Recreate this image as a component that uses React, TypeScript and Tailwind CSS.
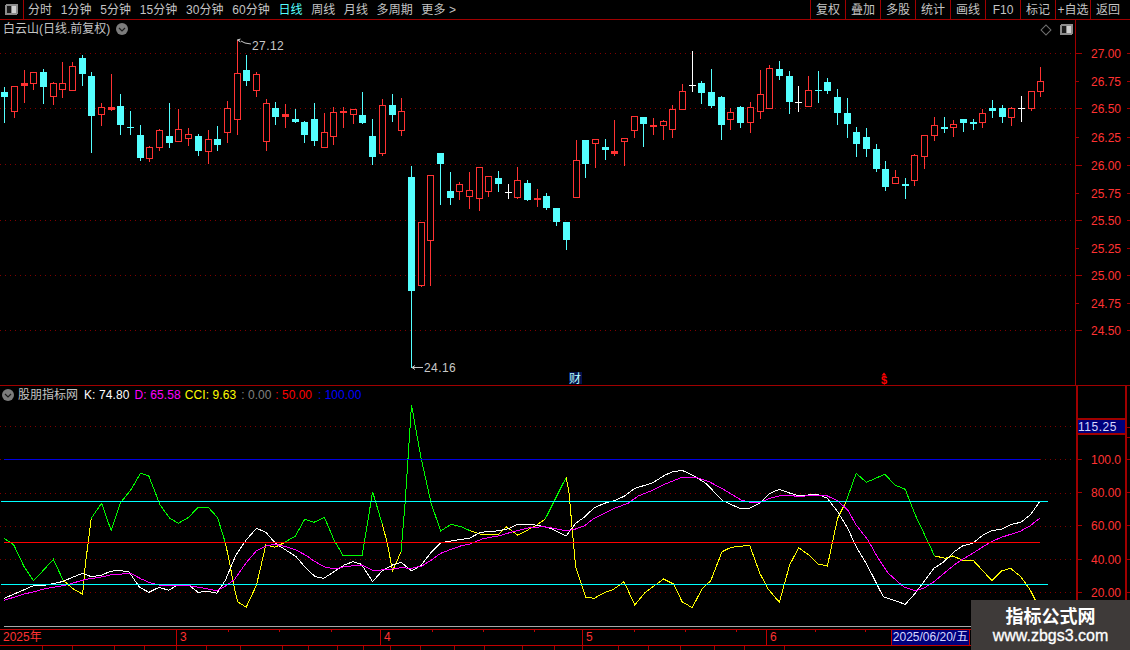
import React from "react";

type C = [number, number, number, number, number, string];
const CY = "#54ffff", RD = "#ff3232", WH = "#ffffff";
const candles: C[] = [
  [4,87,123,92,97,CY],[14,86,118,86,112,RD],[24,70,103,83,86,RD],[33,72,90,72,84,RD],[43,69,104,72,87,CY],
  [53,82,105,83,97,RD],[62,62,98,83,90,RD],[72,62,91,66,91,RD],[82,55,86,58,74,CY],[91,72,153,76,116,CY],
  [101,103,126,107,115,RD],[111,74,111,107,110,RD],[120,94,135,106,125,CY],[130,111,135,127,128,CY],[140,125,161,135,158,CY],
  [149,146,162,147,159,RD],[159,129,151,130,148,RD],[169,103,148,136,143,CY],[178,109,142,129,142,RD],[188,128,146,134,139,RD],
  [198,134,156,136,151,CY],[208,130,164,139,152,RD],[217,126,151,139,145,CY],[227,101,143,108,133,RD],[237,40,135,73,120,RD],
  [246,55,86,70,81,CY],[256,72,97,74,91,RD],[266,99,151,103,142,RD],[275,102,125,108,117,CY],[285,104,128,114,117,RD],
  [295,109,123,119,122,CY],[304,121,143,122,135,CY],[314,103,146,119,141,CY],[324,113,148,132,148,RD],[333,107,145,112,137,RD],
  [343,107,128,111,113,RD],[353,109,124,109,115,RD],[362,92,124,115,123,CY],[372,119,165,136,157,CY],[382,99,156,105,154,RD],
  [392,94,122,105,115,CY],[401,98,136,111,131,RD],[411,166,368,177,291,CY],[421,222,287,222,286,RD],[430,175,286,175,241,RD],
  [440,153,205,153,164,CY],[450,172,205,191,198,CY],[459,182,200,184,192,RD],[469,172,209,190,197,RD],[479,167,211,167,199,RD],
  [488,176,197,176,192,RD],[498,171,192,178,184,CY],[508,184,199,192,193,WH],[517,167,199,180,198,RD],[527,180,201,183,200,CY],
  [537,189,207,198,200,RD],[546,193,210,196,208,CY],[556,208,226,208,222,CY],[566,222,250,222,240,CY],[576,140,198,160,198,RD],
  [585,140,178,140,164,CY],[595,139,168,139,144,RD],[605,139,160,147,150,CY],[614,120,156,151,154,RD],[624,138,166,138,142,RD],
  [634,116,138,116,131,RD],[643,117,147,117,124,CY],[653,118,135,125,127,RD],[663,120,140,121,126,RD],[672,105,138,109,130,RD],
  [682,84,110,91,110,RD],[692,51,92,85,86,WH],[701,81,104,83,93,CY],[711,69,108,92,106,CY],[721,96,140,97,125,CY],
  [730,108,130,112,120,RD],[740,106,128,107,123,CY],[750,102,133,107,123,RD],[760,70,119,94,112,RD],[769,65,109,68,109,RD],
  [779,61,80,69,76,CY],[789,71,114,76,102,CY],[798,86,112,102,103,WH],[808,76,107,90,107,RD],[818,71,103,90,91,CY],
  [827,78,94,82,91,CY],[837,89,125,97,113,CY],[847,98,138,113,124,CY],[856,127,157,132,144,CY],[866,128,157,137,149,CY],
  [876,144,172,149,169,CY],[885,161,191,169,187,CY],[895,170,184,177,184,RD],[905,178,199,184,186,CY],[914,154,186,155,181,RD],
  [924,135,169,135,157,RD],[934,117,141,125,136,RD],[944,117,133,127,129,CY],[953,120,137,124,128,RD],[963,119,132,119,123,CY],
  [973,119,130,122,124,CY],[982,109,128,113,123,RD],[992,100,118,108,111,CY],[1002,105,123,108,117,CY],[1011,107,126,108,118,RD],
  [1021,96,122,108,109,WH],[1031,91,111,91,109,RD],[1040,67,97,81,92,RD],
];

const A = (p: number[][]) => p.map(([x, y]) => `${((x * 1.033) / 3).toFixed(1)},${(400 + y / 3).toFixed(1)}`).join(" ");
const B = (p: number[][]) => p.map(([x, y]) => `${(530 + (x * 1.014) / 3).toFixed(1)},${(460 + y / 3).toFixed(1)}`).join(" ");

const G = "#00ff00", Y = "#ffff00";
const cci: [string, string][] = [
  [G, A([[12,415],[40,435],[70,500],[97,542],[125,512],[155,478],[183,540]])],
  [Y, A([[183,540],[210,565],[240,583],[247,500],[265,355]])],
  [G, A([[265,355],[295,310],[323,392],[350,308],[380,270],[408,220],[432,228],[465,315],[493,355],[518,370],[548,352],[575,322],[605,322],[632,353],[655,430]])],
  [Y, A([[655,430],[665,480],[680,560],[690,605],[715,622],[745,555],[772,435],[798,442],[825,428]])],
  [G, A([[825,428],[858,408],[885,358],[912,367],[942,352],[970,420],[997,468],[1052,466],[1082,275],[1110,372]])],
  [Y, A([[1110,372],[1125,430],[1140,513],[1165,455]])],
  [G, A([[1165,455],[1177,300],[1195,15],[1222,170],[1252,310],[1280,393],[1310,373],[1340,380],[1365,392]])],
  [Y, A([[1365,392],[1395,402],[1450,402],[1470,380],[1503,405],[1530,392]]) + " " + B([[0,205],[20,195],[45,177]])],
  [G, B([[45,177],[107,52]])],
  [Y, B([[107,52],[115,95],[135,320],[165,412],[190,415],[220,398],[247,388],[278,365],[310,435],[340,398],[395,357],[425,372],[450,425],[480,443],[510,385],[535,362],[568,275],[595,262],[650,256],[680,340],[705,388],[738,427],[768,315],[795,263],[825,285],[852,312],[880,318],[910,175],[935,125]])],
  [G, B([[935,125],[965,40],[995,67],[1050,43],[1080,75],[1110,88],[1140,165],[1197,288]])],
  [Y, B([[1197,288],[1230,295],[1250,288],[1280,300],[1310,300],[1367,362],[1395,333],[1422,325],[1452,350],[1480,390],[1510,450]])],
];
const k = A([[12,595],[50,578],[97,557],[135,555],[180,545],[215,530],[240,520],[265,530],[295,526],[320,514],[345,511],[375,516],[405,562],[432,577],[462,562],[490,571],[520,552],[545,552],[575,577],[605,574],[630,580],[655,540],[685,465],[715,420],[745,385],[772,397],[800,430],[830,450],[860,470],[885,500],[915,530],[940,535],[970,515],[1000,495],[1025,485],[1050,493],[1082,545],[1110,512],[1140,495],[1165,487],[1195,512],[1222,497],[1250,460],[1280,428],[1310,423],[1365,414],[1395,397],[1450,392],[1480,385],[1503,373]]) + " " +
  B([[0,193],[30,197],[60,205],[107,228],[135,190],[160,172],[190,143],[220,130],[250,122],[280,108],[310,85],[360,70],[400,45],[420,36],[450,31],[480,45],[520,70],[570,122],[625,147],[650,145],[680,130],[710,100],[738,88],[770,100],[795,107],[850,103],[880,115],[910,155],[940,205],[965,260],[1000,320],[1045,410],[1080,422],[1110,433],[1140,400],[1165,365],[1195,325],[1225,305],[1255,275],[1280,258],[1310,250],[1340,225],[1365,212],[1395,208],[1425,193],[1452,187],[1480,165],[1508,125]]);
const d = A([[12,601],[40,592],[70,582],[100,575],[130,566],[160,561],[190,556],[215,548],[250,538],[290,532],[320,525],[355,522],[380,520],[410,537],[440,550],[470,557],[520,557],[555,558],[595,565],[630,572],[655,558],[680,540],[715,488],[745,452],[772,438],[800,433],[830,440],[860,450],[890,467],[915,485],[945,502],[975,507],[1000,500],[1050,495],[1085,512],[1140,507],[1165,503],[1195,505],[1225,498],[1250,482],[1280,460],[1310,448],[1340,437],[1365,432],[1400,417],[1450,407],[1480,398],[1530,385]]) + " " +
  B([[0,203],[40,200],[70,205],[107,213],[135,207],[160,198],[190,175],[220,160],[250,145],[290,130],[320,108],[360,92],[400,72],[450,52],[490,52],[530,65],[570,87],[625,120],[650,127],[680,127],[710,115],[738,108],[770,106],[795,110],[830,106],[880,108],[910,122],[940,150],[965,195],[1000,240],[1030,295],[1060,340],[1105,380],[1140,392],[1165,385],[1195,365],[1225,340],[1255,315],[1280,298],[1310,280],[1340,260],[1365,245],[1395,232],[1425,222],[1452,213],[1480,197],[1508,175]]);

const AX = "#a00000";
const mainGrid = [53, 108, 164, 220, 275, 330];
const mainTicks: [number, string][] = [
  [53,"27.00"],[81,"26.75"],[108,"26.50"],[137,"26.25"],[165,"26.00"],[193,"25.75"],
  [220,"25.50"],[248,"25.25"],[275,"25.00"],[303,"24.75"],[330,"24.50"],
];
const subGrid = [426, 459, 493, 526, 559, 592];
const subTicks: [number, string][] = [[460,"100.0"],[493,"80.00"],[526,"60.00"],[560,"40.00"],[593,"20.00"]];

function PanelIcon() {
  return (
    <svg width="13" height="11" viewBox="0 0 13 11" shapeRendering="crispEdges">
      <rect x="0" y="0" width="13" height="11" rx="2" fill="#8c8c8c" />
      <rect x="2" y="2" width="4" height="7" fill="#1a1a1a" />
      <rect x="7" y="2" width="4" height="7" fill="#d0d0d0" />
    </svg>
  );
}
function Chevron() {
  return (
    <svg width="12" height="12" viewBox="0 0 12 12">
      <circle cx="6" cy="6" r="6" fill="#7c7c7c" />
      <path d="M3 5 L6 8 L9 5" fill="none" stroke="#1c1c1c" strokeWidth="1.2" />
    </svg>
  );
}

function Candle({ c }: { c: C }) {
  const [x, wt, wb, bt, bb, col] = c;
  const h = bb - bt;
  const solid = col !== RD || h <= 3;
  return (
    <g>
      <rect x={x} y={wt} width={1} height={wb - wt} fill={col} />
      {solid ? (
        <rect x={x - 3} y={bt} width={7} height={Math.max(h, 1)} fill={col} />
      ) : (
        <rect x={x - 2.5} y={bt + 0.5} width={6} height={h - 1} fill="#000" stroke={col} strokeWidth={1} />
      )}
    </g>
  );
}

function MainChart() {
  return (
    <svg width="1075" height="365" viewBox="0 20 1075 365" className="block" shapeRendering="crispEdges">
      {mainGrid.map((y) => (
        <line key={y} x1="0" x2="1075" y1={y + 0.5} y2={y + 0.5} stroke="#800000" strokeDasharray="1 4" />
      ))}
      {candles.map((c, i) => <Candle key={i} c={c} />)}
      <g shapeRendering="auto">
        <path d="M237.5 40 h2.5 M237.5 40 l3 -1 M237.5 40 l3 2 M241 41 l4 2 l6 1" fill="none" stroke="#c8c8c8" strokeWidth="1" />
        <text x="252" y="50" fontSize="12" fill="#c8c8c8" letterSpacing="0.4">27.12</text>
        <path d="M412 367.5 h11 M412 367.5 l3 -2 M412 367.5 l3 2" fill="none" stroke="#c8c8c8" strokeWidth="1" />
        <text x="424" y="372" fontSize="12" fill="#c8c8c8" letterSpacing="0.4">24.16</text>
        <rect x="569" y="372" width="13" height="12" fill="#04104e" />
        <text x="569" y="383" fontSize="12" fill="#b8fdff">财</text>
        <path d="M884 372.5 l-2.5 3 h5 z" fill="#ff0000" />
        <text x="881" y="384" fontSize="11" fontWeight="700" fill="#ff0000">$</text>
      </g>
    </svg>
  );
}

function SubChart() {
  return (
    <svg width="1075" height="243" viewBox="0 386 1075 243" className="block" shapeRendering="crispEdges">
      {subGrid.map((y) => (
        <line key={y} x1="0" x2="1075" y1={y + 0.5} y2={y + 0.5} stroke="#800000" strokeDasharray="1 4" />
      ))}
      {cci.map(([c, p], i) => <polyline key={i} points={p} fill="none" stroke={c} strokeWidth="1" />)}
      <polyline points={k} fill="none" stroke="#ffffff" strokeWidth="1" />
      <polyline points={d} fill="none" stroke="#ff00ff" strokeWidth="1" />
      <line x1="4" x2="1040" y1="459.5" y2="459.5" stroke="#0000e0" />
      <line x1="4" x2="1040" y1="542.5" y2="542.5" stroke="#ff0000" />
      <line x1="1" x2="1048" y1="501.5" y2="501.5" stroke="#00ffff" />
      <line x1="1" x2="1048" y1="584.5" y2="584.5" stroke="#00ffff" />
      <line x1="4" x2="1040" y1="626.5" y2="626.5" stroke="#a8a8a8" />
    </svg>
  );
}

function MainAxis() {
  return (
    <svg width="55" height="365" viewBox="1075 20 55 365" className="block" shapeRendering="crispEdges">
      {mainTicks.map(([y, t], i) => (
        <g key={y}>
          <line x1="1075" x2={i % 2 ? 1079 : 1082} y1={y + 0.5} y2={y + 0.5} stroke={AX} />
          <line x1="1127" x2="1130" y1={y + 0.5} y2={y + 0.5} stroke={AX} />
          <text x="1091" y={y + 5} fontSize="12" fill={RD} shapeRendering="auto">{t}</text>
        </g>
      ))}
    </svg>
  );
}

function SubAxis() {
  return (
    <svg width="55" height="243" viewBox="1075 386 55 243" className="block" shapeRendering="crispEdges">
      <rect x="1076" y="386" width="2" height="243" fill={AX} />
      <rect x="1125" y="386" width="2" height="243" fill={AX} />
      <rect x="1076" y="418" width="51" height="2" fill={AX} />
      <rect x="1076" y="433" width="51" height="2" fill={AX} />
      <rect x="1078" y="420" width="47" height="13" fill="#00007c" />
      <text x="1078" y="431" fontSize="12" fill="#d8d8ff" letterSpacing="0.5" shapeRendering="auto">115.25</text>
      <line x1="1127" x2="1130" y1="427.5" y2="427.5" stroke={AX} />
      <line x1="1127" x2="1130" y1="437.5" y2="437.5" stroke={AX} />
      {subTicks.map(([y, t]) => (
        <g key={y}>
          <line x1="1078" x2="1082" y1={y - 0.5} y2={y - 0.5} stroke={AX} />
          <line x1="1127" x2="1130" y1={y - 0.5} y2={y - 0.5} stroke={AX} />
          <text x="1091" y={y + 4} fontSize="12" fill={RD} shapeRendering="auto">{t}</text>
        </g>
      ))}
    </svg>
  );
}

const leftTabs = ["分时","1分钟","5分钟","15分钟","30分钟","60分钟","日线","周线","月线","多周期"];
const rightTabs = ["复权","叠加","多股","统计","画线","F10","标记","+自选","返回"];

const dateCells: [number, string][] = [[177,"2025年"],[204,"3"],[202,"4"],[184,"5"],[125,"6"]];
const statusCells = [43,30,42,30,32,30,34,42,26,29,26,27,30,34,30,38,32,28,36,30,32,34,30,40];

export default function App() {
  return (
    <div className="relative w-[1130px] h-[650px] overflow-hidden bg-black flex flex-col text-[12px] leading-[14px] font-['Liberation_Sans','Noto_Sans_CJK_SC',sans-serif] text-[#c4c4c4]">
      {/* toolbar */}
      <div className="flex h-[20px] shrink-0 border-b border-[#a00000] items-stretch">
        <div className="w-[24px] border-r border-[#a00000] flex items-center justify-center">
          <PanelIcon />
        </div>
        <div className="flex items-center gap-[8.5px] pl-[4px] flex-1 tracking-[0.1px]">
          {leftTabs.map((t) => (
            <span key={t} className={t === "日线" ? "text-[#54ffff]" : ""}>{t}</span>
          ))}
          <span>更多 &gt;</span>
        </div>
        <div className="flex">
          {rightTabs.map((t) => (
            <span key={t} className="w-[35px] border-l border-[#a00000] flex items-center justify-center whitespace-nowrap">{t}</span>
          ))}
          <span className="w-[5px]" />
        </div>
      </div>

      {/* price panel */}
      <div className="relative flex h-[366px] shrink-0 border-b border-[#a00000]">
        <MainChart />
        <div className="border-l border-[#a00000]">
          <div className="-ml-px"><MainAxis /></div>
        </div>
        <div className="absolute left-[3px] top-[2px] flex items-center gap-[6px]">
          <span>白云山(日线.前复权)</span>
          <Chevron />
        </div>
        <div className="absolute left-[1042px] top-[4px] flex items-center gap-[10px]">
          <span className="w-[8px] h-[8px] rotate-45 border border-[#707070] block" />
          <PanelIcon />
        </div>
      </div>

      {/* indicator panel */}
      <div className="relative flex h-[244px] shrink-0 border-b border-[#c00000]">
        <SubChart />
        <SubAxis />
        <div className="absolute left-[2px] top-[1px] flex items-center h-[15px]">
          <Chevron />
          <span className="ml-[4px]">股朋指标网</span>
          <span className="ml-[6px] text-white tracking-[0.1px]">K: 74.80</span>
          <span className="ml-[5px] text-[#ff00ff] tracking-[0.1px]">D: 65.58</span>
          <span className="ml-[4px] text-[#ffff00] tracking-[0.1px]">CCI: 9.63</span>
          <span className="ml-[5px] text-[#808080]">: 0.00</span>
          <span className="ml-[4px] text-[#ff0000]">: 50.00</span>
          <span className="ml-[6px] text-[#0000ff]">: 100.00</span>
        </div>
      </div>

      {/* date axis */}
      <div className="relative flex h-[16px] shrink-0 border-b border-[#c00000] text-[#ff3232] leading-[15px]">
        {dateCells.map(([w, t]) => (
          <div key={t} style={{ width: w }} className="border-r border-[#c00000] pl-[3px] shrink-0">{t}</div>
        ))}
        <div className="w-[78px] border-r border-[#c00000] bg-[#00007c] text-[#d8d8ff] text-center whitespace-nowrap shrink-0">2025/06/20/五</div>
        {[228,279,331,432,483,534,634,685,736,815,865].map((x) => (
          <span key={x} style={{ left: x }} className="absolute top-0 w-px h-[2px] bg-[#c00000]" />
        ))}
      </div>

      {/* status strip */}
      <div className="flex flex-1 overflow-hidden">
        {statusCells.map((w, i) => (
          <span key={i} style={{ width: w }} className="border-r border-[#a00000] shrink-0" />
        ))}
      </div>

      {/* watermark */}
      <div className="absolute left-[971px] top-[600px] w-[159px] h-[50px] bg-[#3e3a39] flex flex-col items-center justify-center text-white">
        <div className="text-[18px] leading-[22px] font-bold font-['Noto_Sans_CJK_SC',sans-serif]">指标公式网</div>
        <div className="text-[16px] leading-[20px] font-['Liberation_Sans',sans-serif] [-webkit-text-stroke:0.3px_white]">www.zbgs3.com</div>
      </div>
    </div>
  );
}
